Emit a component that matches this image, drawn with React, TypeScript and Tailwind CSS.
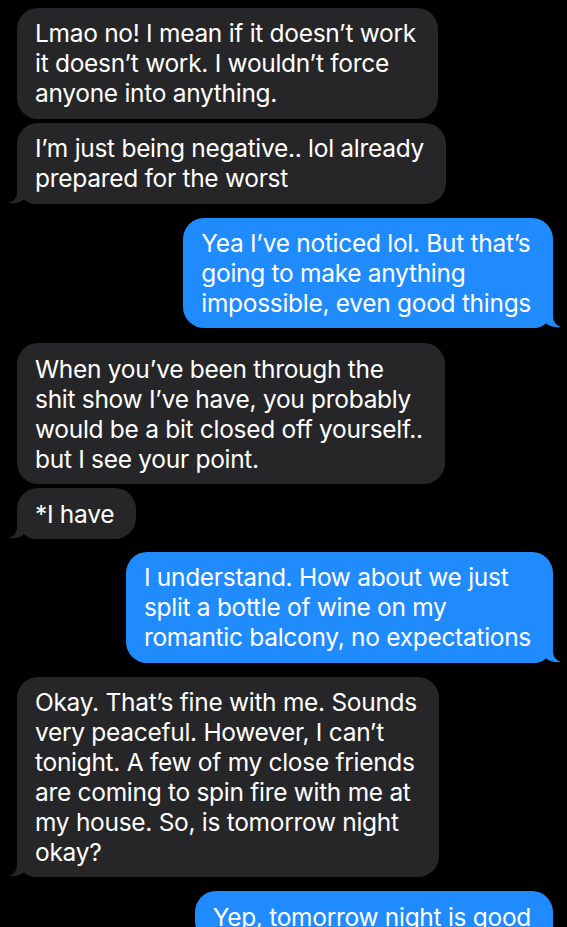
import React from 'react';

type Msg = { from: 'them' | 'me'; lines: string[]; tail?: boolean; gap: number };

const MESSAGES: Msg[] = [
  { from: 'them', gap: 8, lines: ['Lmao no! I mean if it doesn’t work', 'it doesn’t work. I wouldn’t force', 'anyone into anything.'] },
  { from: 'them', gap: 4, tail: true, lines: ['I’m just being negative.. lol already', 'prepared for the worst'] },
  { from: 'me', gap: 14, tail: true, lines: ['Yea I’ve noticed lol. But that’s', 'going to make anything', 'impossible, even good things'] },
  { from: 'them', gap: 15, lines: ['When you’ve been through the', 'shit show I’ve have, you probably', 'would be a bit closed off yourself..', 'but I see your point.'] },
  { from: 'them', gap: 4, tail: true, lines: ['*I have'] },
  { from: 'me', gap: 13, tail: true, lines: ['I understand. How about we just', 'split a bottle of wine on my', 'romantic balcony, no expectations'] },
  { from: 'them', gap: 14, tail: true, lines: ['Okay. That’s fine with me. Sounds', 'very peaceful. However, I can’t', 'tonight. A few of my close friends', 'are coming to spin fire with me at', 'my house. So, is tomorrow night', 'okay?'] },
  { from: 'me', gap: 14, tail: true, lines: ['Yep, tomorrow night is good'] },
];

function Tail({ side, color }: { side: 'left' | 'right'; color: string }) {
  if (side === 'left') {
    return (
      <svg className="absolute bottom-0 left-[-8px]" width="27" height="25" viewBox="0 0 27 25">
        <path d="M8 0 L8 13 C8 19 5 22 0 24 C6 24.8 11.5 23.2 15 20.5 C18 23 22 25 27 25 L27 0 Z" fill={color} />
      </svg>
    );
  }
  return (
    <svg className="absolute bottom-0 right-[-8px]" width="27" height="25" viewBox="0 0 27 25">
      <path d="M19 0 L19 13 C19 19 22 22 27 24 C21 24.8 15.5 23.2 12 20.5 C9 23 5 25 0 25 L0 0 Z" fill={color} />
    </svg>
  );
}

function Bubble({ msg }: { msg: Msg }) {
  const mine = msg.from === 'me';
  const color = mine ? '#1f8bfd' : '#262628';
  return (
    <div className={mine ? 'flex justify-end pr-[14px]' : 'flex justify-start pl-[17px]'} style={{ marginTop: msg.gap }}>
      <div
        className={`relative rounded-[21px] pl-[18px] pr-[22px] py-[10.4px] text-[24.5px] leading-[30px] text-white tracking-[-0.012em] whitespace-nowrap ${
          mine ? 'bg-[#1f8bfd]' : 'bg-[#262628]'
        }`}
      >
        {msg.tail && <Tail side={mine ? 'right' : 'left'} color={color} />}
        <div className="relative">
          {msg.lines.map((l, i) => (
            <div key={i}>{l}</div>
          ))}
        </div>
      </div>
    </div>
  );
}

export default function App() {
  return (
    <div className="w-[567px] h-[927px] overflow-hidden bg-black" style={{ fontFamily: 'Inter, "Noto Sans", sans-serif' }}>
      <div className="flex flex-col">
        {MESSAGES.map((m, i) => (
          <Bubble key={i} msg={m} />
        ))}
      </div>
    </div>
  );
}
